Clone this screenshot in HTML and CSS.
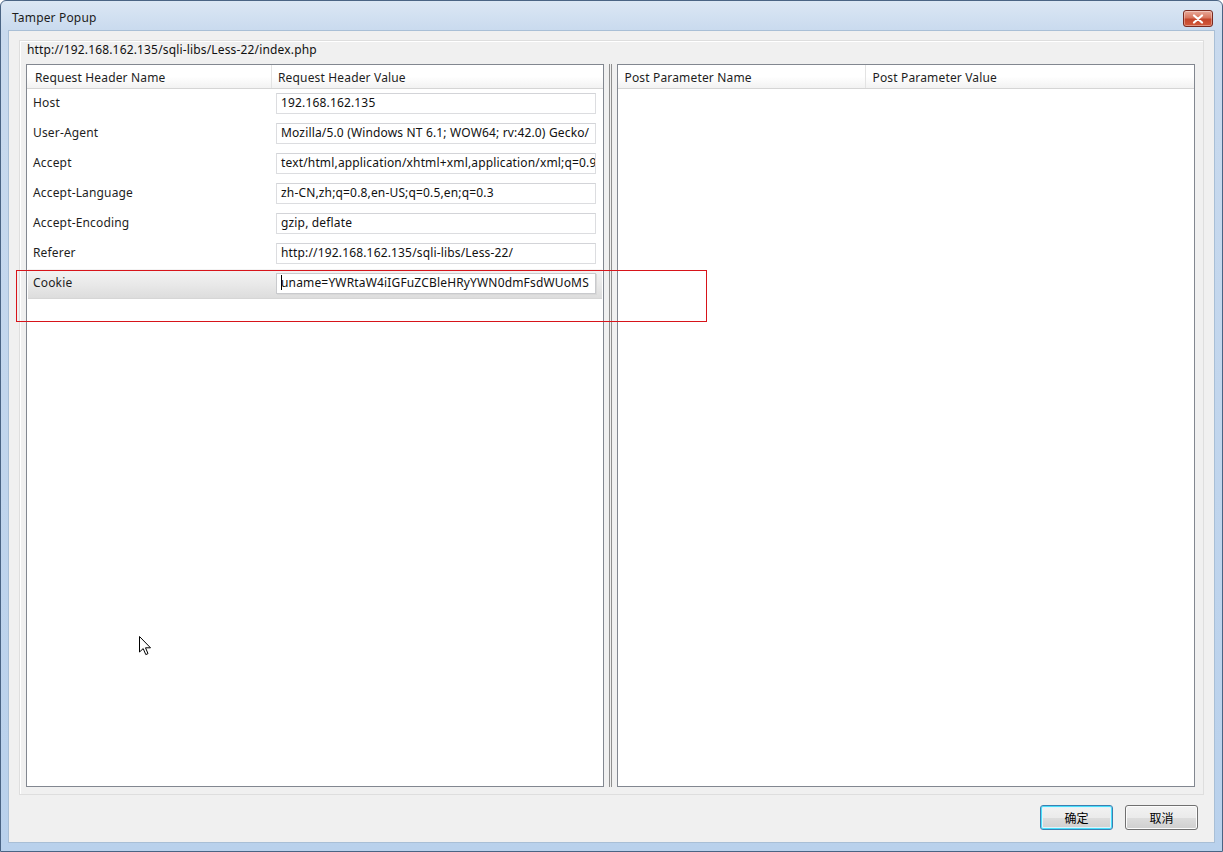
FILE: index.html
```html
<!DOCTYPE html>
<html>
<head>
<meta charset="utf-8">
<title>Tamper Popup</title>
<link rel="stylesheet" href="styles.css">
</head>
<body>
<div class="window">
  <div class="titlebar">
    <span class="title">Tamper Popup</span>
    <div class="close-btn"><svg width="12" height="10" viewBox="0 0 12 10"><path d="M2 1.5 L10 8.5 M10 1.5 L2 8.5" stroke="#fff" stroke-width="2.2" stroke-linecap="round"/></svg></div>
  </div>
  <div class="client">
    <div class="group">
      <div class="url">http://192.168.162.135/sqli-libs/Less-22/index.php</div>
      <div class="panes">
        <div class="panel">
          <div class="head">
            <div class="hcell name">Request Header Name</div>
            <div class="hcell value">Request Header Value</div>
          </div>
          <div class="row"><div class="cell name">Host</div><div class="cell value"><div class="input">192.168.162.135</div></div></div>
          <div class="row"><div class="cell name">User-Agent</div><div class="cell value"><div class="input">Mozilla/5.0 (Windows NT 6.1; WOW64; rv:42.0) Gecko/</div></div></div>
          <div class="row"><div class="cell name">Accept</div><div class="cell value"><div class="input">text/html,application/xhtml+xml,application/xml;q=0.9</div></div></div>
          <div class="row"><div class="cell name">Accept-Language</div><div class="cell value"><div class="input">zh-CN,zh;q=0.8,en-US;q=0.5,en;q=0.3</div></div></div>
          <div class="row"><div class="cell name">Accept-Encoding</div><div class="cell value"><div class="input">gzip, deflate</div></div></div>
          <div class="row"><div class="cell name">Referer</div><div class="cell value"><div class="input">http://192.168.162.135/sqli-libs/Less-22/</div></div></div>
          <div class="row selected"><div class="cell name">Cookie</div><div class="cell value"><div class="input focused"><span class="caret"></span>uname=YWRtaW4iIGFuZCBleHRyYWN0dmFsdWUoMS</div></div></div>
        </div>
        <div class="splitter"><span></span><span></span></div>
        <div class="panel">
          <div class="head">
            <div class="hcell pname">Post Parameter Name</div>
            <div class="hcell value">Post Parameter Value</div>
          </div>
        </div>
      </div>
    </div>
    <div class="buttons">
      <div class="btn default">确定</div>
      <div class="btn">取消</div>
    </div>
  </div>
  <div class="highlight-box"></div>
  <svg class="cursor" width="13" height="21" viewBox="0 0 13 21"><path d="M0.5 0.5 L0.5 16 L4.2 12.6 L6.8 18.6 L9 17.6 L6.5 11.8 L11.5 11.8 Z" fill="#fff" stroke="#000" stroke-width="1" stroke-linejoin="miter"/></svg>
</div>
</body>
</html>
```

FILE: styles.css
```css
html, body {
  margin: 0;
  padding: 0;
  background: #ffffff;
}
body {
  font-family: "Noto Sans", "Noto Sans CJK SC", sans-serif;
  font-size: 12px;
  letter-spacing: 0.16px;
  color: #1e1e1e;
}
.window {
  position: relative;
  width: 1223px;
  height: 852px;
  box-sizing: border-box;
  border: 1px solid #4a6484;
  border-radius: 6px 6px 0 0;
  background: linear-gradient(to bottom, #dbe7f4 0px, #c9daee 30px, #b9d1ec 100%);
  display: flex;
  flex-direction: column;
  overflow: hidden;
}
.titlebar {
  height: 29px;
  box-sizing: border-box;
  display: flex;
  align-items: flex-start;
  justify-content: space-between;
  padding: 9px 9px 0 11px;
  flex-shrink: 0;
}
.title {
  color: #1c1c1c;
  font-size: 12px;
  line-height: 16px;
}
.close-btn {
  width: 30px;
  height: 17px;
  box-sizing: border-box;
  border: 1px solid #7a2a20;
  border-radius: 3px;
  background: linear-gradient(to bottom, #e9a999 0%, #d8765f 45%, #c4452b 55%, #d35a3b 100%);
  display: flex;
  align-items: center;
  justify-content: center;
  box-shadow: inset 0 0 0 1px rgba(255,255,255,0.35);
}
.client {
  margin: 0 7px 8px 7px;
  background: #f0f0f0;
  flex: 1;
  display: flex;
  flex-direction: column;
  border: 1px solid #a9bfd6;
}
.group {
  margin: 9px 10px 0 10px;
  border: 1px solid #dedede;
  box-shadow: inset 1px 1px 0 #ffffff;
  padding: 0 8px 8px 6px;
  height: 755px;
  box-sizing: border-box;
}
.url {
  height: 18px;
  line-height: 18px;
  padding-left: 1px;
  color: #111;
}
.panes {
  margin-top: 5px;
  display: flex;
  height: 723px;
}
.panel {
  width: 578px;
  height: 723px;
  box-sizing: border-box;
  border: 1px solid #828790;
  background: #ffffff;
}
.splitter {
  width: 14px;
  display: flex;
  justify-content: center;
  gap: 1px;
}
.splitter span {
  width: 1px;
  background: #8f8f8f;
}
.head {
  height: 24px;
  display: flex;
  box-sizing: border-box;
  border-bottom: 1px solid #d5d5d5;
  background: linear-gradient(to bottom, #ffffff 0%, #ffffff 50%, #f2f2f2 100%);
}
.hcell {
  line-height: 23px;
  padding-top: 1px;
  box-sizing: border-box;
  white-space: nowrap;
}
.hcell.name {
  width: 245px;
  padding-left: 8px;
  border-right: 1px solid #e3e3e3;
}
.hcell.pname {
  width: 248px;
  padding-left: 6px;
  border-right: 1px solid #e3e3e3;
}
.hcell.value {
  padding-left: 6px;
}
.row {
  height: 30px;
  display: flex;
  align-items: flex-start;
  padding-top: 4px;
  box-sizing: border-box;
}
.cell.name {
  width: 245px;
  box-sizing: border-box;
  padding-left: 6px;
  line-height: 20px;
  flex-shrink: 0;
}
.cell.value {
  padding-left: 4px;
}
.input {
  width: 320px;
  height: 21px;
  box-sizing: border-box;
  border: 1px solid #dcdde0;
  border-top-color: #d3d4d8;
  background: #ffffff;
  padding-left: 4px;
  line-height: 18px;
  white-space: nowrap;
  overflow: hidden;
  color: #111;
}
.input.focused {
  border-color: #c9cacd;
  box-shadow: 1px 1px 0 #d8d8d8;
}
.caret {
  display: inline-block;
  width: 1px;
  height: 15px;
  background: #000;
  vertical-align: -3px;
  margin-right: -1px;
}
.row.selected {
  margin-left: 1px;
  margin-right: 1px;
  background: linear-gradient(to bottom, #f3f3f3 0%, #e9e9e9 50%, #dcdcdc 100%);
  box-shadow: inset 0 -1px 0 #d6d6d6;
}
.row.selected .cell.name {
  width: 244px;
  padding-left: 5px;
}
.buttons {
  display: flex;
  justify-content: flex-end;
  gap: 12px;
  margin-top: 10px;
  padding-right: 16px;
}
.btn {
  width: 73px;
  height: 25px;
  box-sizing: border-box;
  border: 1px solid #707070;
  border-radius: 3px;
  background: linear-gradient(to bottom, #f2f2f2 0%, #ebebeb 50%, #dddddd 51%, #cfcfcf 100%);
  box-shadow: inset 0 0 0 1px #fcfcfc;
  display: flex;
  align-items: center;
  justify-content: center;
  font-size: 12px;
  letter-spacing: 0;
  color: #000;
}
.btn.default {
  border-color: #3c7fb1;
  box-shadow: inset 0 0 0 1px #48dffb, inset 0 0 0 2px #e0f3fb;
}
.highlight-box {
  position: absolute;
  left: 15px;
  top: 269px;
  width: 691px;
  height: 52px;
  box-sizing: border-box;
  border: 1px solid #d7141a;
  pointer-events: none;
}
.cursor {
  position: absolute;
  left: 138px;
  top: 635px;
}
```
